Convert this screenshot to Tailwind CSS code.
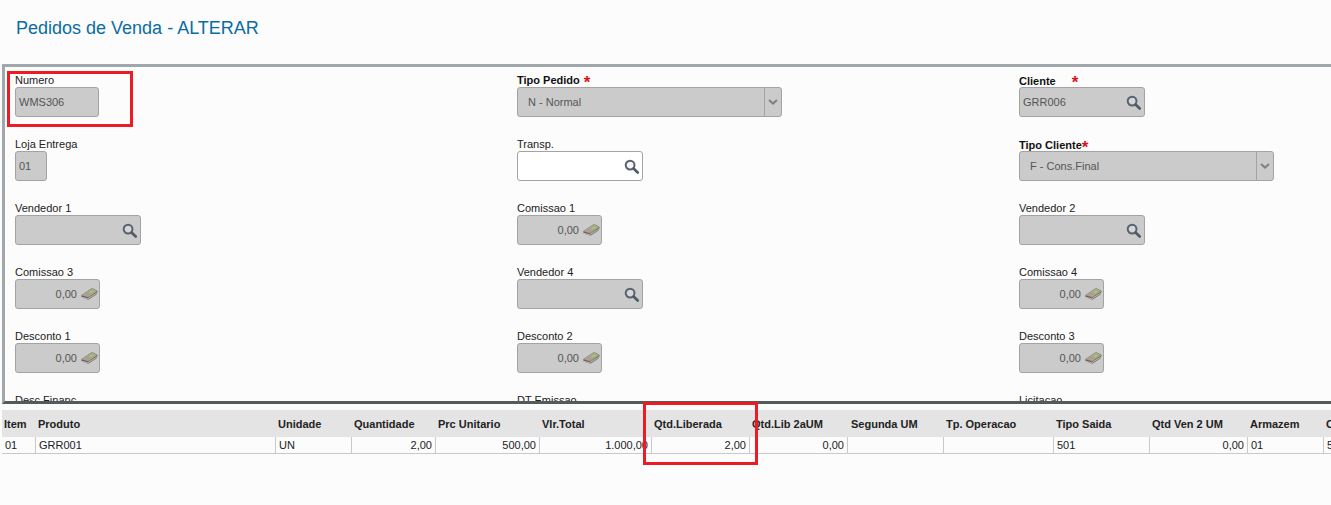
<!DOCTYPE html>
<html lang="pt">
<head>
<meta charset="utf-8">
<script src="https://cdn.jsdelivr.net/npm/@tailwindcss/browser@4"></script>
</head>
<body class="m-0 bg-[#fcfcfc]">
<svg class="hidden">
  <symbol id="lupa" viewBox="0 0 16 16"><circle cx="6.5" cy="6.5" r="4.7" fill="#e6e6e6" fill-opacity="0.4" stroke="#566270" stroke-width="2.1"/><path d="M10.2 10.2l4.4 4.2" stroke="#4d5a68" stroke-width="2.8" stroke-linecap="round"/></symbol>
  <symbol id="dinheiro" viewBox="0 0 17 12"><path d="M0.5 7 L9.5 1 C10.5 0.4 11.5 0.4 12.5 0.8 L16 2.4 C16.8 3 16.6 4 16 5 L15.5 6.5 L8.5 11 C7.5 11.6 6.5 11.6 5.5 11.3 L1 9.8 C0.4 9.4 0.3 8 0.5 7Z" fill="#6b6357"/><path d="M0.8 7 L9.5 1.2 C10.5 0.6 11.5 0.6 12.5 1 L15.6 2.5 C16.2 3 16 3.6 15.3 4.1 L8.5 8.4 C7.5 9 6.5 9 5.5 8.7 L1.2 7.6Z" fill="#a9a294"/><path d="M7.5 4.2 10.8 2 13.6 3.2 10.4 5.4Z" fill="#a2c765"/><path d="M1 9.4 6.6 10.8 15.8 5.2" fill="none" stroke="#ded9cc" stroke-width="0.8"/></symbol>
  <symbol id="seta" viewBox="0 0 10 6"><path d="M1 1l4 3.6L9 1" fill="none" stroke="#7c8288" stroke-width="2"/></symbol>
</svg>
<div class="relative h-[505px] w-[1331px] overflow-hidden font-['Liberation_Sans',Arial,sans-serif] text-[11px] text-[#222]">
  <h1 class="m-0 h-[64px] pl-[16px] pt-[17px] text-[18px] leading-[22px] font-normal text-[#0a6ca3]">Pedidos de Venda - ALTERAR</h1>

  <section class="ml-[2px] h-[340px] w-[1329px] overflow-hidden border-t-[3px] border-b-[3px] border-l-[3px] border-t-[#a0a8ab] border-l-[#a0a8ab] border-b-[#555a5a] pl-[10px] pt-[7px]">
    <div class="grid grid-cols-[502px_502px_300px] auto-rows-[64px]">
      <div>
        <label class="block h-[13px] leading-[13px]">Numero</label>
        <div class="flex h-[30px] w-[84px] items-center rounded-[3px] border border-[#a3a3a3] bg-[#cbcbcb] pl-[3px] text-[#555]">WMS306</div>
      </div>
      <div>
        <label class="block h-[13px] leading-[13px] font-bold text-[#111]">Tipo Pedido <span class="ml-[1px] align-[-4px] text-[17px] leading-[10px] text-[#e0101a]">*</span></label>
        <div class="flex h-[30px] w-[265px] items-center rounded-[3px] border border-[#a3a3a3] bg-[#cbcbcb] text-[#555]"><span class="flex-1 pl-[10px]">N - Normal</span><span class="flex h-full w-[17px] items-center justify-center border-l border-[#a3a3a3]"><svg class="h-[6px] w-[10px]"><use href="#seta"/></svg></span></div>
      </div>
      <div>
        <label class="block h-[13px] leading-[15px] font-bold text-[#111]">Cliente <span class="ml-[13px] align-[-3px] text-[17px] leading-[10px] text-[#e0101a]">*</span></label>
        <div class="flex h-[30px] w-[126px] items-center rounded-[3px] border border-[#a3a3a3] bg-[#cbcbcb] pl-[3px] pr-[3px] text-[#555]"><span class="flex-1">GRR006</span><svg class="h-[15px] w-[15px]"><use href="#lupa"/></svg></div>
      </div>

      <div>
        <label class="block h-[13px] leading-[13px]">Loja Entrega</label>
        <div class="flex h-[30px] w-[32px] items-center rounded-[3px] border border-[#a3a3a3] bg-[#cbcbcb] pl-[3px] text-[#555]">01</div>
      </div>
      <div>
        <label class="block h-[13px] leading-[13px]">Transp.</label>
        <div class="flex h-[30px] w-[126px] items-center justify-end rounded-[3px] border border-[#a3a3a3] bg-white pr-[3px]"><svg class="h-[15px] w-[15px]"><use href="#lupa"/></svg></div>
      </div>
      <div>
        <label class="block h-[13px] leading-[15px] font-bold text-[#111]">Tipo Cliente<span class="align-[-4px] text-[17px] leading-[10px] text-[#e0101a]">*</span></label>
        <div class="flex h-[30px] w-[255px] items-center rounded-[3px] border border-[#a3a3a3] bg-[#cbcbcb] text-[#555]"><span class="flex-1 pl-[10px]">F - Cons.Final</span><span class="flex h-full w-[17px] items-center justify-center border-l border-[#a3a3a3]"><svg class="h-[6px] w-[10px]"><use href="#seta"/></svg></span></div>
      </div>

      <div>
        <label class="block h-[13px] leading-[13px]">Vendedor 1</label>
        <div class="flex h-[30px] w-[126px] items-center justify-end rounded-[3px] border border-[#a3a3a3] bg-[#cbcbcb] pr-[3px]"><svg class="h-[15px] w-[15px]"><use href="#lupa"/></svg></div>
      </div>
      <div>
        <label class="block h-[13px] leading-[13px]">Comissao 1</label>
        <div class="flex h-[30px] w-[85px] items-center justify-end gap-[4px] rounded-[3px] border border-[#a3a3a3] bg-[#cbcbcb] pr-[1px] text-[#555]">0,00<svg class="h-[12px] w-[17px]"><use href="#dinheiro"/></svg></div>
      </div>
      <div>
        <label class="block h-[13px] leading-[13px]">Vendedor 2</label>
        <div class="flex h-[30px] w-[126px] items-center justify-end rounded-[3px] border border-[#a3a3a3] bg-[#cbcbcb] pr-[3px]"><svg class="h-[15px] w-[15px]"><use href="#lupa"/></svg></div>
      </div>

      <div>
        <label class="block h-[13px] leading-[13px]">Comissao 3</label>
        <div class="flex h-[30px] w-[85px] items-center justify-end gap-[4px] rounded-[3px] border border-[#a3a3a3] bg-[#cbcbcb] pr-[1px] text-[#555]">0,00<svg class="h-[12px] w-[17px]"><use href="#dinheiro"/></svg></div>
      </div>
      <div>
        <label class="block h-[13px] leading-[13px]">Vendedor 4</label>
        <div class="flex h-[30px] w-[126px] items-center justify-end rounded-[3px] border border-[#a3a3a3] bg-[#cbcbcb] pr-[3px]"><svg class="h-[15px] w-[15px]"><use href="#lupa"/></svg></div>
      </div>
      <div>
        <label class="block h-[13px] leading-[13px]">Comissao 4</label>
        <div class="flex h-[30px] w-[85px] items-center justify-end gap-[4px] rounded-[3px] border border-[#a3a3a3] bg-[#cbcbcb] pr-[1px] text-[#555]">0,00<svg class="h-[12px] w-[17px]"><use href="#dinheiro"/></svg></div>
      </div>

      <div>
        <label class="block h-[13px] leading-[13px]">Desconto 1</label>
        <div class="flex h-[30px] w-[85px] items-center justify-end gap-[4px] rounded-[3px] border border-[#a3a3a3] bg-[#cbcbcb] pr-[1px] text-[#555]">0,00<svg class="h-[12px] w-[17px]"><use href="#dinheiro"/></svg></div>
      </div>
      <div>
        <label class="block h-[13px] leading-[13px]">Desconto 2</label>
        <div class="flex h-[30px] w-[85px] items-center justify-end gap-[4px] rounded-[3px] border border-[#a3a3a3] bg-[#cbcbcb] pr-[1px] text-[#555]">0,00<svg class="h-[12px] w-[17px]"><use href="#dinheiro"/></svg></div>
      </div>
      <div>
        <label class="block h-[13px] leading-[13px]">Desconto 3</label>
        <div class="flex h-[30px] w-[85px] items-center justify-end gap-[4px] rounded-[3px] border border-[#a3a3a3] bg-[#cbcbcb] pr-[1px] text-[#555]">0,00<svg class="h-[12px] w-[17px]"><use href="#dinheiro"/></svg></div>
      </div>

      <div><label class="block h-[13px] leading-[13px]">Desc.Financ</label></div>
      <div><label class="block h-[13px] leading-[13px]">DT Emissao</label></div>
      <div><label class="block h-[13px] leading-[13px]">Licitacao</label></div>
    </div>
  </section>

  <div class="ml-[2px] mt-[6px] w-[1329px] overflow-hidden">
    <div class="grid h-[27px] grid-cols-[33px_240px_76px_84px_104px_112px_98px_98px_96px_110px_96px_98px_76px_40px] items-center bg-[#e4e4e4] pt-[1px] font-bold whitespace-nowrap text-[#222]">
      <div class="pl-[2px]">Item</div><div class="pl-[3px]">Produto</div><div class="pl-[3px]">Unidade</div><div class="pl-[3px]">Quantidade</div><div class="pl-[3px]">Prc Unitario</div><div class="pl-[3px]">Vlr.Total</div><div class="pl-[3px]">Qtd.Liberada</div><div class="pl-[3px]">Qtd.Lib 2aUM</div><div class="pl-[4px]">Segunda UM</div><div class="pl-[3px]">Tp. Operacao</div><div class="pl-[3px]">Tipo Saida</div><div class="pl-[3px]">Qtd Ven 2 UM</div><div class="pl-[3px]">Armazem</div><div class="pl-[3px]">C</div>
    </div>
    <div class="grid h-[17px] grid-cols-[34px_240px_76px_84px_104px_112px_98px_98px_96px_110px_96px_98px_76px_39px] items-center border-b border-[#c9c9c9] whitespace-nowrap text-[#222]">
      <div class="h-full border-r border-[#c9c9c9] pl-[3px]">01</div>
      <div class="h-full border-r border-[#c9c9c9] pl-[3px]">GRR001</div>
      <div class="h-full border-r border-[#c9c9c9] pl-[3px]">UN</div>
      <div class="h-full border-r border-[#c9c9c9] pr-[3px] text-right">2,00</div>
      <div class="h-full border-r border-[#c9c9c9] pr-[3px] text-right">500,00</div>
      <div class="h-full border-r border-[#c9c9c9] pr-[3px] text-right">1.000,00</div>
      <div class="h-full border-r border-[#c9c9c9] pr-[3px] text-right">2,00</div>
      <div class="h-full border-r border-[#c9c9c9] pr-[3px] text-right">0,00</div>
      <div class="h-full border-r border-[#c9c9c9]"></div>
      <div class="h-full border-r border-[#c9c9c9]"></div>
      <div class="h-full border-r border-[#c9c9c9] pl-[3px]">501</div>
      <div class="h-full border-r border-[#c9c9c9] pr-[3px] text-right">0,00</div>
      <div class="h-full border-r border-[#c9c9c9] pl-[3px]">01</div>
      <div class="h-full pl-[3px]">5</div>
    </div>
  </div>

  <div class="absolute left-[7px] top-[71px] h-[56px] w-[126px] border-[3px] border-[#ed1c24]"></div>
  <div class="absolute left-[643px] top-[402px] h-[63px] w-[115px] border-[3px] border-[#ed1c24]"></div>
</div>
</body>
</html>
